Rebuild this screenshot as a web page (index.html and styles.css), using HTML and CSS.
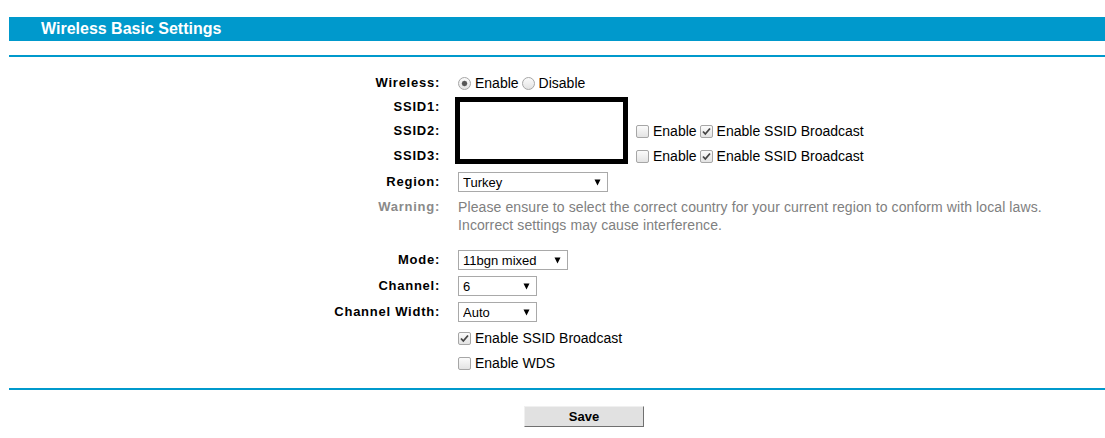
FILE: index.html
```html
<!DOCTYPE html>
<html lang="en">
<head>
  <meta charset="UTF-8" />
  <title>Wireless Basic Settings</title>
  <link rel="stylesheet" href="styles.css">
</head>
<body>
  <div class="page">
    <div class="title-bar">Wireless Basic Settings</div>
    <hr class="rule rule-top">

    <form class="settings">
      <label class="lbl">Wireless:</label>
      <div class="val">
        <input type="radio" name="wl" class="rd" checked><span class="txt">Enable</span>
        <input type="radio" name="wl" class="rd"><span class="txt">Disable</span>
      </div>

      <label class="lbl">SSID1:</label>
      <div class="ssid-box"></div>

      <label class="lbl">SSID2:</label>
      <div class="val ssid-opt ssid2">
        <input type="checkbox" class="cb"><span class="txt">Enable</span>
        <input type="checkbox" class="cb" checked><span class="txt">Enable SSID Broadcast</span>
      </div>

      <label class="lbl">SSID3:</label>
      <div class="val ssid-opt ssid3">
        <input type="checkbox" class="cb"><span class="txt">Enable</span>
        <input type="checkbox" class="cb" checked><span class="txt">Enable SSID Broadcast</span>
      </div>

      <label class="lbl">Region:</label>
      <div class="val">
        <select class="sel sel-region"><option>Turkey</option></select>
      </div>

      <label class="lbl lbl-warn">Warning:</label>
      <div class="warn">
        Please ensure to select the correct country for your current region to conform with local laws.<br>
        Incorrect settings may cause interference.
      </div>

      <label class="lbl">Mode:</label>
      <div class="val">
        <select class="sel sel-mode"><option>11bgn mixed</option></select>
      </div>

      <label class="lbl">Channel:</label>
      <div class="val">
        <select class="sel sel-small"><option>6</option></select>
      </div>

      <label class="lbl">Channel Width:</label>
      <div class="val">
        <select class="sel sel-small"><option>Auto</option></select>
      </div>

      <div class="val wide">
        <input type="checkbox" class="cb" checked><span class="txt">Enable SSID Broadcast</span>
      </div>

      <div class="val wide">
        <input type="checkbox" class="cb"><span class="txt">Enable WDS</span>
      </div>
    </form>

    <hr class="rule rule-bottom">

    <div class="actions">
      <button type="button" class="btn-save">Save</button>
    </div>
  </div>
</body>
</html>
```

FILE: styles.css
```css
body {
  margin: 0;
  padding: 0;
  background: #fff;
  font-family: "Liberation Sans", Arial, sans-serif;
  color: #000;
  overflow: hidden;
}

.page {
  margin-left: 9px;
  padding-top: 17px;
}

.title-bar {
  height: 24px;
  line-height: 24px;
  background-color: #0099cc;
  color: #fff;
  font-size: 16px;
  font-weight: bold;
  padding-left: 32px;
}

.rule {
  border: none;
  height: 2px;
  background-color: #0099cc;
  margin: 0;
}

.rule-top {
  margin-top: 14px;
}

.settings {
  display: grid;
  grid-template-columns: 431px 1fr;
  grid-template-rows: 24px 24px 24px 26px 26px 52px 26px 26px 26px 26px 24px;
  column-gap: 18px;
  margin-top: 14px;
}

.lbl {
  text-align: right;
  font-size: 13px;
  font-weight: bold;
  letter-spacing: 0.75px;
  align-self: center;
  line-height: 16px;
}

.lbl-warn {
  color: #8a8a8a;
  align-self: start;
  padding-top: 4px;
}

.val {
  display: flex;
  align-items: center;
  font-size: 14px;
}

.txt {
  line-height: 16px;
}

.wide {
  grid-column: 2;
}

.ssid-box {
  grid-column: 2;
  grid-row: 2 / span 3;
  margin: 2px 0 0 -3px;
  width: 163px;
  height: 57px;
  border: 5px solid #000;
  background: #fff;
}

.ssid-opt {
  grid-column: 2;
  padding-left: 178px;
}

.ssid2 {
  grid-row: 3;
}

.ssid3 {
  grid-row: 4;
}

.warn {
  color: #808080;
  font-size: 14px;
  letter-spacing: 0.1px;
  line-height: 18px;
  padding-top: 3px;
}

/* old-style form controls */
.cb,
.rd {
  -webkit-appearance: none;
  appearance: none;
  width: 13px;
  height: 13px;
  margin: 0 4px 0 0;
  border: 1px solid #a6a6a6;
  background: linear-gradient(#fbfbfb, #e3e3e3);
  flex-shrink: 0;
}

.cb {
  border-radius: 2px;
}

.cb:checked {
  background-image: url("data:image/svg+xml,%3Csvg xmlns='http://www.w3.org/2000/svg' width='11' height='11'%3E%3Cpath d='M2 5.5 L4.3 8 L9 2.5' fill='none' stroke='%23444' stroke-width='1.8'/%3E%3C/svg%3E"), linear-gradient(#fbfbfb, #e3e3e3);
  background-repeat: no-repeat;
}

.rd {
  border-radius: 50%;
}

.rd:checked {
  background: radial-gradient(circle, #555 0, #555 2px, #888 2.6px, transparent 3.2px), linear-gradient(#fbfbfb, #e3e3e3);
}

.val .txt + .cb,
.val .txt + .rd {
  margin-left: 3px;
}

.sel {
  -webkit-appearance: none;
  appearance: none;
  height: 20px;
  border: 1px solid #a9a9a9;
  border-radius: 0;
  background: #fff url("data:image/svg+xml,%3Csvg xmlns='http://www.w3.org/2000/svg' width='7' height='7'%3E%3Cpath d='M0.5 0.5 H6.5 L3.5 6.5 Z' fill='%23000'/%3E%3C/svg%3E") no-repeat right 6px center;
  font-family: "Liberation Sans", Arial, sans-serif;
  font-size: 13px;
  color: #000;
  padding: 0 0 0 4px;
  margin: 0;
}

.sel-region {
  width: 150px;
}

.sel-mode {
  width: 110px;
}

.sel-small {
  width: 79px;
}

.rule-bottom {
  margin-top: 13px;
}

.actions {
  padding: 16px 0 0 515px;
}

.btn-save {
  width: 120px;
  height: 21px;
  background: #e1e1e1;
  border: 1px solid;
  border-color: #f0f0f0 #707070 #707070 #f0f0f0;
  font-family: "Liberation Sans", Arial, sans-serif;
  font-size: 13px;
  font-weight: bold;
  color: #000;
  padding: 0;
}
```
